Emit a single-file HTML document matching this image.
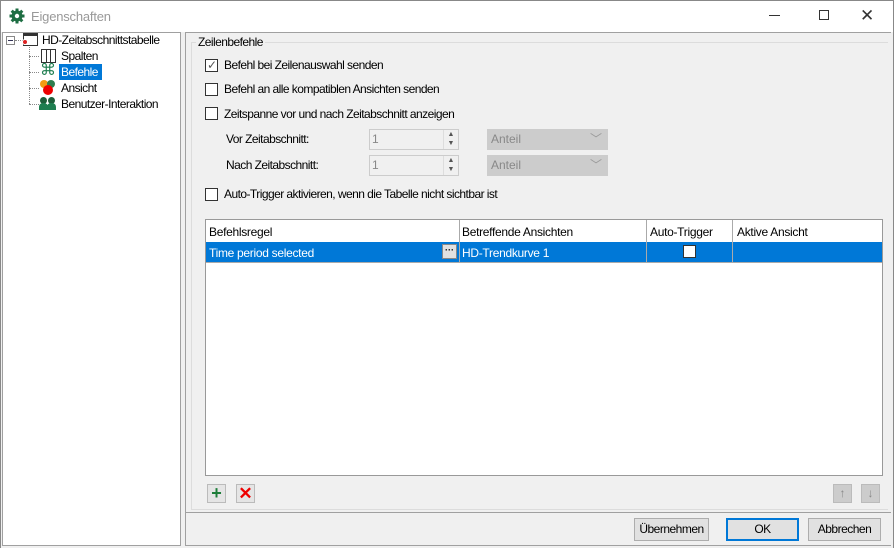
<!DOCTYPE html>
<html><head><meta charset="utf-8"><style>
*{box-sizing:border-box;margin:0;padding:0}
body{width:894px;height:548px;background:#f0f0f0;font-family:"Liberation Sans",sans-serif;font-size:12px;color:#000;position:relative;overflow:hidden}
.a{position:absolute}
.cb{position:absolute;width:13px;height:13px;border:1px solid #333;background:#fff}
.lbl{position:absolute;font-size:12px;letter-spacing:-0.55px}
.btn{position:absolute;height:23px;border:1px solid #adadad;background:#e1e1e1;text-align:center;line-height:21px;font-size:12px;letter-spacing:-0.5px}
.inp{position:absolute;border:1px solid #ccc;background:#f0f0f0;color:#888;height:21px;line-height:19px;padding-left:2px}
.sel{position:absolute;background:#ccc;border:1px solid #ccc;color:#888;height:21px;line-height:19px;padding-left:3px}
</style></head><body>
<div class="a" style="left:0;top:0;width:894px;height:32px;background:#fff;border:1px solid #888;border-bottom:none"></div>
<svg class="a" style="left:9px;top:8px" width="16" height="16" viewBox="0 0 16 16"><g fill="#1e6e43"><circle cx="8" cy="8" r="5.5"/><rect x="6.5" y="0.5" width="3" height="15"/><rect x="0.5" y="6.5" width="15" height="3"/><rect x="6.5" y="0.5" width="3" height="15" transform="rotate(45 8 8)"/><rect x="6.5" y="0.5" width="3" height="15" transform="rotate(-45 8 8)"/></g><circle cx="8" cy="8" r="2.2" fill="#fff"/></svg>
<div class="lbl" style="left:31px;top:9px;font-size:13px;color:#999;letter-spacing:-0.2px">Eigenschaften</div>
<div class="a" style="left:769px;top:15px;width:11px;height:1px;background:#333"></div>
<div class="a" style="left:819px;top:10px;width:10px;height:10px;border:1px solid #333"></div>
<div class="a" style="left:860px;top:6px;font-size:17px;color:#333">✕</div>
<div class="a" style="left:0;top:32px;width:1px;height:516px;background:#888"></div>
<div class="a" style="left:893px;top:32px;width:1px;height:516px;background:#888"></div>

<div class="a" style="left:2px;top:32px;width:179px;height:514px;background:#fff;border:1px solid #a0a0a0"></div>
<div class="a" style="left:6px;top:36px;width:9px;height:9px;border:1px solid #888;background:#fff"></div>
<div class="a" style="left:8px;top:40px;width:5px;height:1px;background:#335"></div>
<div class="a" style="left:15px;top:40px;width:8px;border-top:1px dotted #888"></div>
<div class="a" style="left:29px;top:44px;height:60px;border-left:1px dotted #888"></div>
<div class="a" style="left:29px;top:56px;width:10px;border-top:1px dotted #888"></div>
<div class="a" style="left:29px;top:72px;width:10px;border-top:1px dotted #888"></div>
<div class="a" style="left:29px;top:88px;width:10px;border-top:1px dotted #888"></div>
<div class="a" style="left:29px;top:104px;width:10px;border-top:1px dotted #888"></div>
<div class="a" style="left:23px;top:33px;width:15px;height:13px;border:1px solid #333;border-top:3px solid #333;background:#fff"></div>
<div class="a" style="left:22px;top:39px;width:6px;height:6px;border-radius:50%;background:#d22;border:1px solid #fff"></div>
<div class="lbl" style="left:42px;top:33px">HD-Zeitabschnittstabelle</div>
<div class="a" style="left:41px;top:49px;width:15px;height:14px;border:1px solid #333;background:linear-gradient(90deg,transparent 4px,#333 4px,#333 5px,transparent 5px,transparent 8px,#333 8px,#333 9px,transparent 9px)"></div>
<div class="lbl" style="left:61px;top:49px">Spalten</div>
<div class="a" style="left:40px;top:63px;font-size:16px;color:#1e7e50;line-height:16px">⌘</div>
<div class="a" style="left:59px;top:64px;width:43px;height:16px;background:#0078d7"></div>
<div class="lbl" style="left:61px;top:65px;color:#fff">Befehle</div>
<div class="a" style="left:40px;top:80px;width:8px;height:8px;border-radius:50%;background:#f39c12"></div>
<div class="a" style="left:47px;top:80px;width:8px;height:8px;border-radius:50%;background:#2e7d4f"></div>
<div class="a" style="left:43px;top:85px;width:10px;height:10px;border-radius:50%;background:#e00"></div>
<div class="lbl" style="left:61px;top:81px">Ansicht</div>
<div class="a" style="left:40px;top:97px;width:7px;height:7px;border-radius:50%;background:#1e5e3a"></div>
<div class="a" style="left:48px;top:97px;width:7px;height:7px;border-radius:50%;background:#1e5e3a"></div>
<div class="a" style="left:39px;top:103px;width:9px;height:7px;border-radius:4px 4px 0 0;background:#1e7e50"></div>
<div class="a" style="left:47px;top:103px;width:9px;height:7px;border-radius:4px 4px 0 0;background:#1e7e50"></div>
<div class="lbl" style="left:61px;top:97px">Benutzer-Interaktion</div>

<div class="a" style="left:185px;top:32px;width:706px;height:514px;border:1px solid #a0a0a0;border-right:none"></div>
<div class="a" style="left:191px;top:42px;width:697px;height:468px;border:1px solid #dcdcdc;border-right:none"></div>
<div class="lbl" style="left:196px;top:35px;background:#f0f0f0;padding:0 2px">Zeilenbefehle</div>
<div class="cb" style="left:205px;top:59px"></div>
<div class="a" style="left:207px;top:58px;font-size:12px;color:#555">✓</div>
<div class="lbl" style="left:224px;top:58px">Befehl bei Zeilenauswahl senden</div>
<div class="cb" style="left:205px;top:83px"></div>
<div class="lbl" style="left:224px;top:82px">Befehl an alle kompatiblen Ansichten senden</div>
<div class="cb" style="left:205px;top:107px"></div>
<div class="lbl" style="left:224px;top:107px">Zeitspanne vor und nach Zeitabschnitt anzeigen</div>
<div class="lbl" style="left:226px;top:132px">Vor Zeitabschnitt:</div>
<div class="inp" style="left:369px;top:129px;width:90px">1</div>
<div class="a" style="left:443px;top:130px;width:15px;height:19px;border-left:1px solid #ddd;font-size:7px;color:#555;text-align:center;line-height:9px">▲<br>▼</div>
<div class="sel" style="left:487px;top:129px;width:121px">Anteil<span style="position:absolute;right:5px;color:#999">﹀</span></div>
<div class="lbl" style="left:226px;top:158px">Nach Zeitabschnitt:</div>
<div class="inp" style="left:369px;top:155px;width:90px">1</div>
<div class="a" style="left:443px;top:156px;width:15px;height:19px;border-left:1px solid #ddd;font-size:7px;color:#555;text-align:center;line-height:9px">▲<br>▼</div>
<div class="sel" style="left:487px;top:155px;width:121px">Anteil<span style="position:absolute;right:5px;color:#999">﹀</span></div>
<div class="cb" style="left:205px;top:188px"></div>
<div class="lbl" style="left:224px;top:187px">Auto-Trigger aktivieren, wenn die Tabelle nicht sichtbar ist</div>

<div class="a" style="left:205px;top:219px;width:678px;height:257px;background:#fff;border:1px solid #999"></div>
<div class="a" style="left:206px;top:242px;width:676px;height:20px;background:#0078d7"></div>
<div class="a" style="left:206px;top:262px;width:676px;height:1px;background:#aaa"></div>
<div class="a" style="left:459px;top:220px;width:1px;height:42px;background:#aaa"></div>
<div class="a" style="left:646px;top:220px;width:1px;height:42px;background:#aaa"></div>
<div class="a" style="left:732px;top:220px;width:1px;height:42px;background:#aaa"></div>
<div class="lbl" style="left:209px;top:225px;letter-spacing:-0.3px">Befehlsregel</div>
<div class="lbl" style="left:462px;top:225px;letter-spacing:-0.3px">Betreffende Ansichten</div>
<div class="lbl" style="left:650px;top:225px;letter-spacing:-0.3px">Auto-Trigger</div>
<div class="lbl" style="left:737px;top:225px;letter-spacing:-0.3px">Aktive Ansicht</div>
<div class="lbl" style="left:209px;top:246px;color:#fff;letter-spacing:-0.3px">Time period selected</div>
<div class="a" style="left:442px;top:244px;width:15px;height:15px;background:#e1e1e1;border:1px solid #888;font-size:9px;text-align:center;line-height:10px;font-weight:bold">···</div>
<div class="lbl" style="left:462px;top:246px;color:#fff;letter-spacing:-0.3px">HD-Trendkurve 1</div>
<div class="a" style="left:683px;top:245px;width:13px;height:13px;background:#fff;border:1px solid #333"></div>

<div class="a" style="left:207px;top:484px;width:19px;height:19px;border:1px solid #bbb;background:#e5e5e5;color:#1e7e3a;font-size:18px;font-weight:bold;text-align:center;line-height:17px">+</div>
<div class="a" style="left:236px;top:484px;width:19px;height:19px;border:1px solid #bbb;background:#e5e5e5;color:#e00;font-size:17px;font-weight:bold;text-align:center;line-height:18px">✕</div>
<div class="a" style="left:833px;top:484px;width:19px;height:19px;border:1px solid #bbb;background:#ccc;color:#888;font-size:12px;text-align:center;line-height:17px">↑</div>
<div class="a" style="left:861px;top:484px;width:19px;height:19px;border:1px solid #bbb;background:#ccc;color:#888;font-size:12px;text-align:center;line-height:17px">↓</div>

<div class="a" style="left:186px;top:512px;width:705px;height:1px;background:#a0a0a0"></div>
<div class="btn" style="left:634px;top:518px;width:75px">Übernehmen</div>
<div class="btn" style="left:726px;top:518px;width:73px;border:2px solid #0078d7;line-height:19px">OK</div>
<div class="btn" style="left:808px;top:518px;width:73px">Abbrechen</div>
</body></html>
